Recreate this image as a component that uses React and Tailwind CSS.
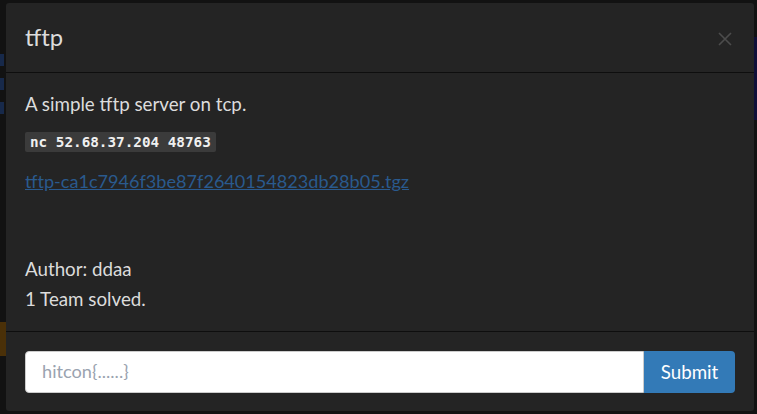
import React, { useState } from "react";

const App = () => {
  const [flag, setFlag] = useState("");

  return (
    <div
      className="w-[757px] h-[414px] overflow-hidden bg-[#121212] flex"
      style={{ fontFamily: "Lato, 'Open Sans', sans-serif" }}
    >
      {/* page behind the backdrop */}
      <div className="w-[6px] shrink-0 flex flex-col">
        <div className="h-[54px]" />
        <div className="h-[12px] w-[4px] bg-[#17294a]" />
        <div className="h-[12px]" />
        <div className="h-[12px] w-[4px] bg-[#17294a]" />
        <div className="h-[12px]" />
        <div className="h-[12px] w-[4px] bg-[#17294a]" />
        <div className="h-[208px]" />
        <div className="h-[34px] w-[6px] bg-[#4a3008]" />
      </div>

      <div className="mt-[3px] w-[748px] h-[408px] shrink-0 bg-[#242424] rounded-[3px] flex flex-col text-[#dcdcdc]">
        <div className="h-[70px] px-[19px] flex items-center justify-between border-b border-[#0e0e0e]">
          <h4 className="text-[23.75px] leading-none">tftp</h4>
          <button className="mr-[3px] mt-[2px]">
            <svg width="14" height="14" viewBox="0 0 14 14">
              <path d="M1 1 L13 13 M13 1 L1 13" stroke="#4c4c4c" strokeWidth="1.6" />
            </svg>
          </button>
        </div>

        <div className="px-[19px] pt-[17px] flex-1 text-[18.75px] leading-[27px]">
          <p>A simple tftp server on tcp.</p>
          <div className="mt-[15px] h-[20px]">
            <code
              className="inline-block bg-[#3b3b3b] text-[#f0f0f0] px-[5px] h-[20px] leading-[20px] rounded-[2px] text-[14.3px] font-bold align-top"
              style={{ fontFamily: "'DejaVu Sans Mono', 'Liberation Mono', monospace" }}
            >
              nc 52.68.37.204 48763
            </code>
          </div>
          <a href="#" className="block mt-[16px] text-[18.1px] text-[#2a5a8e] underline">
            tftp-ca1c7946f3be87f2640154823db28b05.tgz
          </a>
          <p className="mt-[60px]">Author: ddaa</p>
          <p className="mt-[3px]">1 Team solved.</p>
        </div>

        <div className="h-[80px] border-t border-[#0e0e0e] px-[19px] pt-[19px]">
          <div className="flex h-[42px]">
            <input
              value={flag}
              onChange={(e) => setFlag(e.target.value)}
              placeholder="hitcon{......}"
              className="flex-1 bg-white rounded-l-[4px] border border-[#cccccc] px-[16px] text-[18.2px] text-[#333] placeholder:text-[#9aa3b0] outline-none"
            />
            <button className="w-[91px] bg-[#337ab7] text-white text-[18.75px] rounded-r-[4px]">
              Submit
            </button>
          </div>
        </div>
      </div>

      <div className="w-[3px] shrink-0 flex flex-col">
        <div className="h-[37px]" />
        <div className="h-[83px] w-[3px] bg-[#0f0f38]" />
      </div>
    </div>
  );
};

export default App;
